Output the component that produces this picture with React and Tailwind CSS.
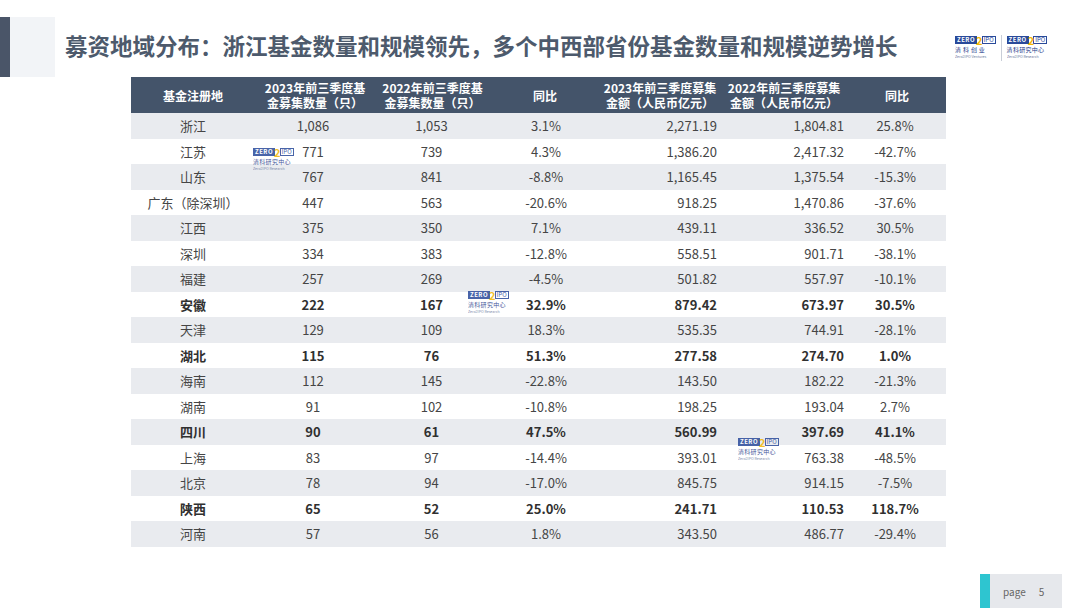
import React from 'react';

const rows = [
  ['浙江', '1,086', '1,053', '3.1%', '2,271.19', '1,804.81', '25.8%'],
  ['江苏', '771', '739', '4.3%', '1,386.20', '2,417.32', '-42.7%'],
  ['山东', '767', '841', '-8.8%', '1,165.45', '1,375.54', '-15.3%'],
  ['广东（除深圳）', '447', '563', '-20.6%', '918.25', '1,470.86', '-37.6%'],
  ['江西', '375', '350', '7.1%', '439.11', '336.52', '30.5%'],
  ['深圳', '334', '383', '-12.8%', '558.51', '901.71', '-38.1%'],
  ['福建', '257', '269', '-4.5%', '501.82', '557.97', '-10.1%'],
  ['安徽', '222', '167', '32.9%', '879.42', '673.97', '30.5%', true],
  ['天津', '129', '109', '18.3%', '535.35', '744.91', '-28.1%'],
  ['湖北', '115', '76', '51.3%', '277.58', '274.70', '1.0%', true],
  ['海南', '112', '145', '-22.8%', '143.50', '182.22', '-21.3%'],
  ['湖南', '91', '102', '-10.8%', '198.25', '193.04', '2.7%'],
  ['四川', '90', '61', '47.5%', '560.99', '397.69', '41.1%', true],
  ['上海', '83', '97', '-14.4%', '393.01', '763.38', '-48.5%'],
  ['北京', '78', '94', '-17.0%', '845.75', '914.15', '-7.5%'],
  ['陕西', '65', '52', '25.0%', '241.71', '110.53', '118.7%', true],
  ['河南', '57', '56', '1.8%', '343.50', '486.77', '-29.4%'],
];

const font = { fontFamily: '"Noto Sans CJK SC", "Noto Sans", sans-serif' };

// small zero2ipo mark, used in header and as watermark
const Mark = ({ sub, tiny, className = '' }) => (
  <div className={`flex flex-col items-start leading-none ${className}`}>
    <div className="flex items-center h-[10px]">
      <span className="bg-[#2a4a9a] text-white text-[6px] font-bold px-[2px] h-[8px] leading-[8px] tracking-[0.5px]">ZERO</span>
      <span className="text-[#f2b705] text-[11px] font-bold leading-[10px] -mx-[1px] relative">2</span>
      <span className="border border-[#2a4a9a] text-[#2a4a9a] text-[6px] px-[1px] h-[8px] leading-[6px]">IPO</span>
    </div>
    <span className="text-[#1d3a8a] text-[6px] mt-[2px] tracking-[0.3px]">{sub}</span>
    <span className="text-[#6b7aa0] text-[4px] mt-[1px] scale-90 origin-left">{tiny}</span>
  </div>
);

export default function App() {
  return (
    <div className="w-[1080px] h-[608px] bg-white relative overflow-hidden" style={font}>
      <div className="flex items-center mt-[17px] h-[60px]">
        <div className="w-[10px] h-full bg-[#4a5568]" />
        <div className="w-[45px] h-full bg-[#f2f4f7]" />
        <h1 className="ml-[10px] text-[22.5px] font-bold text-[#4d5a6c] -mt-[2px]">
          募资地域分布：浙江基金数量和规模领先，多个中西部省份基金数量和规模逆势增长
        </h1>
      </div>

      <div className="absolute left-[955px] top-[35px] flex items-start gap-[5px]">
        <Mark sub="清 科 创 业" tiny="Zero2IPO Ventures" />
        <div className="w-px h-[26px] bg-[#c9ced8]" />
        <Mark sub="清科研究中心" tiny="Zero2IPO Research" />
      </div>

      <div className="ml-[131px] w-[815px] text-[13px] text-[#454545]">
        <div className="grid grid-cols-[124px_120px_115px_110px_120px_128px_98px] h-[36px] bg-[#44546a] text-white text-[12px] font-bold leading-[15px]">
          <div className="flex items-center justify-center">基金注册地</div>
          <div className="flex items-center justify-center text-center">2023年前三季度基<br />金募集数量（只）</div>
          <div className="flex items-center justify-center text-center">2022年前三季度基<br />金募集数量（只）</div>
          <div className="flex items-center justify-center">同比</div>
          <div className="flex items-center justify-center text-center">2023年前三季度募集<br />金额（人民币亿元）</div>
          <div className="flex items-center justify-center text-center">2022年前三季度募集<br />金额（人民币亿元）</div>
          <div className="flex items-center justify-center">同比</div>
        </div>
        {rows.map((r, i) => (
          <div
            key={r[0]}
            className={`grid grid-cols-[124px_120px_115px_110px_120px_128px_98px] h-[25.5px] items-center ${
              i % 2 === 0 ? 'bg-[#e9ebef]' : 'bg-white'
            } ${r[7] ? 'font-bold text-[#303030]' : ''}`}
          >
            <div className="text-center">{r[0]}</div>
            <div className="text-center pr-[4px]">{r[1]}</div>
            <div className="text-center pr-[2px]">{r[2]}</div>
            <div className="text-center pl-[2px]">{r[3]}</div>
            <div className="text-right pr-[3px]">{r[4]}</div>
            <div className="text-right pr-[4px]">{r[5]}</div>
            <div className="text-center pr-[4px]">{r[6]}</div>
          </div>
        ))}
      </div>

      <Mark sub="清科研究中心" tiny="Zero2IPO Research" className="absolute left-[253px] top-[147px] opacity-85" />
      <Mark sub="清科研究中心" tiny="Zero2IPO Research" className="absolute left-[468px] top-[290px] opacity-85" />
      <Mark sub="清科研究中心" tiny="Zero2IPO Research" className="absolute left-[738px] top-[437px] opacity-85" />

      <div className="absolute left-[980px] top-[574px] flex h-[34px]">
        <div className="w-[10px] bg-[#2ec5d0]" />
        <div className="w-[72px] bg-[#e6e8ec] flex items-center pl-[13px] gap-[13px] text-[10px] text-[#666]">
          <span>page</span>
          <span>5</span>
        </div>
      </div>
    </div>
  );
}
